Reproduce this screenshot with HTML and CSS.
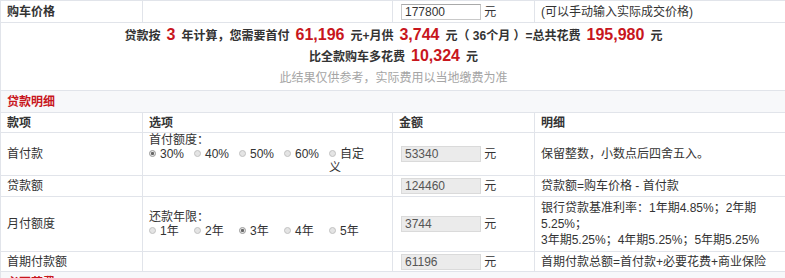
FILE: index.html
```html
<!DOCTYPE html>
<html lang="zh-CN">

<head>
    <meta charset="UTF-8">
    <title>贷款计算</title>
    <link rel="stylesheet" href="styles.css">
</head>

<body>

    <table class="calc">
        <colgroup>
            <col class="c1">
            <col class="c2">
            <col class="c3">
            <col class="c4">
        </colgroup>
        <tr class="row-price">
            <th>购车价格</th>
            <td></td>
            <td><input class="num" type="text" value="177800"> 元</td>
            <td>(可以手动输入实际成交价格)</td>
        </tr>
        <tr>
            <td colspan="4" class="summary">
                <p class="sum-line">贷款按<em>3</em>年计算，您需要首付<em>61,196</em>元+月供<em>3,744</em>元（ 36个月 ）=总共花费<em>195,980</em>元</p>
                <p class="sum-line">比全款购车多花费<em>10,324</em>元</p>
                <p class="sum-note">此结果仅供参考，实际费用以当地缴费为准</p>
            </td>
        </tr>
        <tr class="section">
            <td colspan="4">贷款明细</td>
        </tr>
        <tr class="head">
            <th>款项</th>
            <th>选项</th>
            <th>金额</th>
            <th>明细</th>
        </tr>
        <tr>
            <td>首付款</td>
            <td class="options">
                <div>首付额度：</div>
                <div class="opts">
                    <label class="opt"><span class="radio on"></span>30%</label>
                    <label class="opt"><span class="radio"></span>40%</label>
                    <label class="opt"><span class="radio"></span>50%</label>
                    <label class="opt"><span class="radio"></span>60%</label>
                    <label class="opt"><span class="radio"></span>自定义</label>
                </div>
            </td>
            <td><input class="num off" type="text" value="53340" disabled> 元</td>
            <td>保留整数，小数点后四舍五入。</td>
        </tr>
        <tr>
            <td>贷款额</td>
            <td></td>
            <td><input class="num off" type="text" value="124460" disabled> 元</td>
            <td>贷款额=购车价格 - 首付款</td>
        </tr>
        <tr>
            <td>月付额度</td>
            <td class="options">
                <div>还款年限：</div>
                <div class="opts">
                    <label class="opt"><span class="radio"></span>1年</label>
                    <label class="opt"><span class="radio"></span>2年</label>
                    <label class="opt"><span class="radio on"></span>3年</label>
                    <label class="opt"><span class="radio"></span>4年</label>
                    <label class="opt"><span class="radio"></span>5年</label>
                </div>
            </td>
            <td><input class="num off" type="text" value="3744" disabled> 元</td>
            <td class="rate">银行贷款基准利率：1年期4.85%；2年期5.25%；<br>3年期5.25%；4年期5.25%；5年期5.25%</td>
        </tr>
        <tr class="row-first">
            <td>首期付款额</td>
            <td></td>
            <td><input class="num off" type="text" value="61196" disabled> 元</td>
            <td>首期付款总额=首付款+必要花费+商业保险</td>
        </tr>
        <tr class="section">
            <td colspan="4">必要花费</td>
        </tr>
    </table>

</body>

</html>
```

FILE: styles.css
```css
html {
    overflow: hidden;
}

body {
    margin: 0;
    font-family: "Liberation Sans", "Noto Sans CJK SC", sans-serif;
    font-size: 12px;
    color: #333;
}

.calc {
    width: 786px;
    border-collapse: collapse;
    table-layout: fixed;
}

.c1 {
    width: 142px;
}

.c2 {
    width: 250px;
}

.c3 {
    width: 142px;
}

.c4 {
    width: 252px;
}

.calc td,
.calc th {
    border: 1px solid #e1e4ea;
    padding: 2px 6px;
    line-height: 16px;
    text-align: left;
    vertical-align: middle;
}

.calc th {
    font-weight: bold;
}

.row-price td,
.row-price th {
    padding-top: 3px;
}

.head th,
.row-first td {
    padding-bottom: 1px;
}

/* 汇总 */
.summary {
    text-align: center !important;
    padding: 3px 0 1px !important;
}

.summary p {
    margin: 0;
    line-height: 21px;
}

.sum-line {
    font-weight: bold;
}

.sum-line em {
    font-style: normal;
    font-size: 16px;
    line-height: 1;
    color: #c8161d;
    margin: 0 6px;
}

.sum-note {
    color: #a5a5a5;
}

.section td {
    background: #f7f8fa;
    color: #c8161d;
    font-weight: bold;
    padding: 3px 6px 2px;
}

/* 输入框 */
.num {
    box-sizing: border-box;
    width: 80px;
    height: 16px;
    margin: 0 0 0 2px;
    padding: 0 3px;
    border: 1px solid #c9c9c9;
    border-top-color: #a9a9a9;
    font: 12px/14px "Liberation Sans", sans-serif;
    color: #333;
    vertical-align: top;
    background: #fff;
}

.num.off {
    background: #ebebeb;
    border-color: #dadada;
    color: #555;
}

/* 单选项 */
.options {
    line-height: 14px !important;
    padding-top: 0 !important;
    padding-bottom: 0 !important;
}

.opts {
    display: flex;
}

.opt {
    width: 45px;
    flex-shrink: 0;
}

.radio {
    display: inline-block;
    box-sizing: border-box;
    width: 7px;
    height: 7px;
    margin-right: 4px;
    border: 1px solid #c2c2c2;
    border-radius: 50%;
    background: #e4e4e4;
    vertical-align: 1px;
}

.radio.on {
    border-color: #9a9a9a;
    background: radial-gradient(circle, #666 0 1.3px, #e4e4e4 1.8px);
}

.rate {
    padding-top: 3px !important;
    padding-bottom: 3px !important;
}
```
